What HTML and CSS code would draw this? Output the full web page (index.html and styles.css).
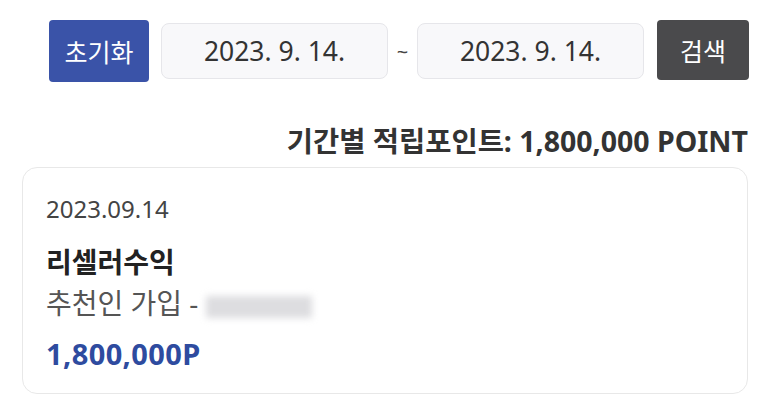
FILE: index.html
```html
<!DOCTYPE html>
<html lang="ko">
<head>
<meta charset="utf-8">
<link rel="stylesheet" href="styles.css">
</head>
<body>
<div class="page">
  <div class="toolbar">
    <button class="btn btn-reset">초기화</button>
    <div class="date-input">2023. 9. 14.</div>
    <span class="tilde">~</span>
    <div class="date-input">2023. 9. 14.</div>
    <button class="btn btn-search">검색</button>
  </div>
  <div class="summary">기간별 적립포인트: 1,800,000 POINT</div>
  <div class="card">
    <div class="card-date">2023.09.14</div>
    <div class="card-title">리셀러수익</div>
    <div class="card-desc">추천인 가입 - <span class="masked"></span></div>
    <div class="card-amount">1,800,000P</div>
  </div>
</div>
</body>
</html>
```
FILE: styles.css
```css
html, body {
  margin: 0;
  padding: 0;
  background: #ffffff;
}
body {
  font-family: "Noto Sans", "Noto Sans CJK KR", sans-serif;
  color: #333;
}
.page {
  width: 773px;
  box-sizing: border-box;
  padding: 20px 24px 0 22px;
}
.toolbar {
  display: flex;
  align-items: center;
  justify-content: flex-end;
  height: 62px;
}
.btn {
  border: none;
  font-family: inherit;
  font-size: 25px;
  color: #fff;
  border-radius: 4px;
  padding: 0;
  display: flex;
  align-items: center;
  justify-content: center;
}
.btn-reset {
  width: 100px;
  height: 62px;
  background: #3a53a8;
  margin-right: 12px;
}
.btn-search {
  width: 92px;
  height: 60px;
  background: #4a4a4c;
  margin-left: 13px;
  margin-top: -3px;
}
.date-input {
  width: 227px;
  height: 56px;
  box-sizing: border-box;
  border: 1px solid #e6e6ea;
  background: #f8f8fa;
  border-radius: 8px;
  display: flex;
  align-items: center;
  justify-content: center;
  font-size: 26.5px;
  color: #333;
}
.tilde {
  width: 29px;
  text-align: center;
  font-size: 20px;
  color: #444;
}
.summary {
  margin-top: 42px;
  text-align: right;
  font-size: 28.5px;
  font-weight: 700;
  color: #333;
  line-height: 34px;
  padding-right: 1px;
}
.card {
  margin-top: 9px;
  margin-right: 1px;
  height: 227px;
  box-sizing: border-box;
  border: 1px solid #e8e8e8;
  border-radius: 15px;
  padding: 26px 23px 0 23px;
}
.card-date {
  font-size: 24px;
  color: #444;
  line-height: 30px;
}
.card-title {
  margin-top: 19px;
  font-size: 28px;
  font-weight: 700;
  color: #222;
  line-height: 38px;
}
.card-desc {
  margin-top: 3px;
  font-size: 28px;
  color: #555;
  line-height: 38px;
}
.masked {
  display: inline-block;
  width: 106px;
  height: 22px;
  vertical-align: -4px;
  background: #dddde0;
  filter: blur(3.5px);
}
.card-amount {
  margin-top: 14px;
  font-size: 29px;
  letter-spacing: 0.4px;
  font-weight: 700;
  color: #2e4b9f;
  line-height: 36px;
}
```
